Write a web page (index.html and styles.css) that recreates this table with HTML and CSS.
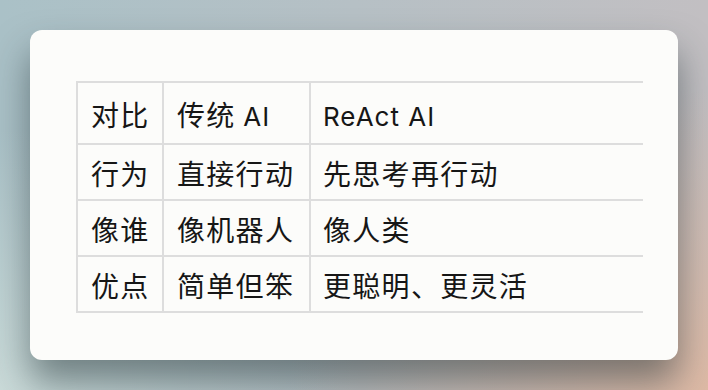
FILE: index.html
```html
<!DOCTYPE html>
<html lang="zh-CN">
<head>
<meta charset="utf-8">
<title>ReAct 对比</title>
<link rel="stylesheet" href="styles.css">
</head>
<body>
<div class="card">
  <div class="table-wrap">
    <table class="compare">
      <thead>
        <tr class="head-row">
          <th class="c1">对比</th>
          <th class="c2">传统 <span class="latin">AI</span></th>
          <th class="c3"><span class="latin">ReAct AI</span></th>
        </tr>
      </thead>
      <tbody>
        <tr>
          <td class="c1">行为</td>
          <td class="c2">直接行动</td>
          <td class="c3">先思考再行动</td>
        </tr>
        <tr>
          <td class="c1">像谁</td>
          <td class="c2">像机器人</td>
          <td class="c3">像人类</td>
        </tr>
        <tr>
          <td class="c1">优点</td>
          <td class="c2">简单但笨</td>
          <td class="c3">更聪明、更灵活</td>
        </tr>
      </tbody>
    </table>
  </div>
</div>
</body>
</html>
```

FILE: styles.css
```css
html, body {
  margin: 0;
  padding: 0;
}

body {
  width: 708px;
  height: 390px;
  overflow: hidden;
  background:
    radial-gradient(ellipse 420px 300px at 100% 100%, rgba(224, 186, 164, 0.95), rgba(224, 186, 164, 0) 100%),
    radial-gradient(ellipse 360px 260px at 0% 100%, rgba(204, 220, 218, 0.95), rgba(204, 220, 218, 0) 100%),
    linear-gradient(90deg, #aac1c7 0%, #b6c0c5 50%, #c2bfc2 100%);
  font-family: "Noto Sans CJK SC", "Noto Sans", sans-serif;
  color: #161616;
  padding-top: 30px;
  box-sizing: border-box;
}

.card {
  margin: 0 30px;
  height: 330px;
  box-sizing: border-box;
  background: #fcfcfa;
  border-radius: 12px;
  box-shadow: 0 22px 36px rgba(30, 45, 50, 0.5);
  padding: 51px 0 0 46px;
}

.table-wrap {
  width: 567px;
  overflow: hidden;
}

.compare {
  border-collapse: separate;
  border-spacing: 0;
  border-top: 2px solid #dddddd;
  border-left: 2px solid #dddddd;
  width: 640px;
  font-size: 28px;
  letter-spacing: 1.3px;
  text-align: left;
}

.compare th,
.compare td {
  font-weight: 400;
  border-right: 2px solid #dddddd;
  border-bottom: 2px solid #dddddd;
  padding: 2px 12px 0 13px;
  height: 52px;
  vertical-align: middle;
  white-space: nowrap;
}

.compare .head-row th {
  height: 58px;
}

.compare .c1 {
  width: 59px;
}

.compare .c2 {
  width: 120px;
}

.compare .c3 {
  padding-left: 12px;
}

.latin {
  font-family: "Inter", "Noto Sans", sans-serif;
  font-weight: 400;
  font-size: 26px;
  letter-spacing: 1px;
}
```
